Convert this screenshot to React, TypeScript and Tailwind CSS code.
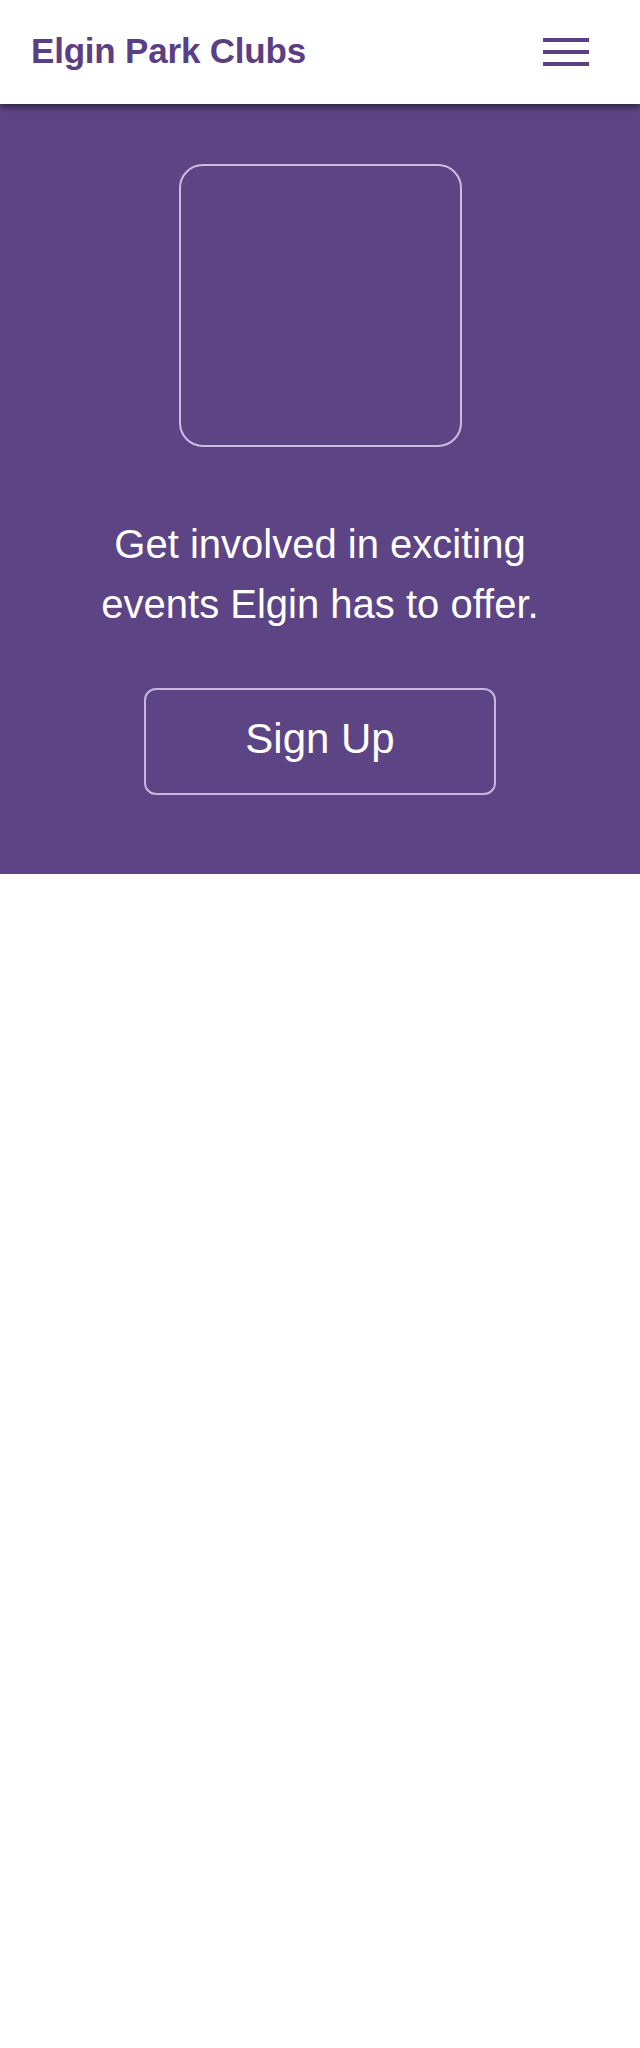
import React from "react";

export default function App() {
  return (
    <div className="min-h-[2048px] bg-white" style={{ fontFamily: '"Liberation Sans", Arial, sans-serif' }}>
      <header className="relative z-10 flex h-[104px] items-center justify-between bg-white pl-[31px] pr-[51px] shadow-[0_3px_7px_rgba(0,0,0,0.55)]">
        <h1 className="text-[35px] font-bold leading-none tracking-[-0.2px] text-[#5b3f85] mt-[-4px]">Elgin Park Clubs</h1>
        <button className="flex w-[46px] flex-col gap-[8px]" aria-label="Menu">
          <span className="block h-[4px] w-full bg-[#5b4184]" />
          <span className="block h-[4px] w-full bg-[#5b4184]" />
          <span className="block h-[4px] w-full bg-[#5b4184]" />
        </button>
      </header>
      <section className="flex flex-col items-center bg-[#5d4585] pt-[60px] pb-[79px]">
        <div className="h-[283px] w-[283px] rounded-[24px] border-2 border-[#cbbde4]" />
        <p className="mt-[67px] text-center text-[40px] leading-[60px] text-white">
          Get involved in exciting
          <br />
          events Elgin has to offer.
        </p>
        <button className="mt-[54px] flex h-[107px] w-[352px] items-center justify-center rounded-[12px] border-2 border-[#c6b6e0] pb-[6px] text-[42px] text-white">
          Sign Up
        </button>
      </section>
    </div>
  );
}
